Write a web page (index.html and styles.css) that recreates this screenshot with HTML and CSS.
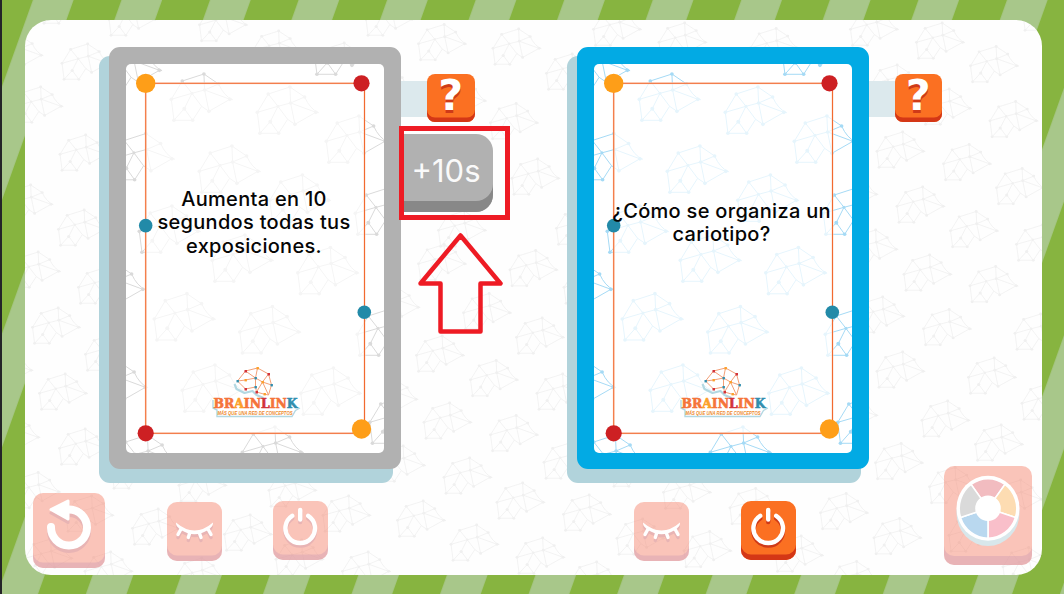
FILE: index.html
```
<!DOCTYPE html>
<html lang="es">
<head>
<meta charset="utf-8">
<title>BrainLink</title>
<link rel="stylesheet" href="styles.css">
</head>
<body>
<svg class="defs" aria-hidden="true">
  <defs>
    <g id="brain">
      <path fill="none" stroke="currentColor" stroke-width="3" d="M8 139L0 76L33 21L98 0L142 30Q158 66 184 77L176 76L113 112L91 97L64 139H8L39 104L64 139M39 104L62 58L0 76M33 21L62 58L100 48L98 0M142 30L100 48L176 76M100 48L113 112M62 58L91 97"/>
      <g fill="currentColor"><circle cx="0" cy="76" r="5.5"/><circle cx="33" cy="21" r="5.5"/><circle cx="98" cy="0" r="5.5"/><circle cx="142" cy="30" r="5.5"/><circle cx="176" cy="76" r="5.5"/><circle cx="113" cy="112" r="5.5"/><circle cx="64" cy="139" r="5.5"/><circle cx="8" cy="139" r="5.5"/><circle cx="39" cy="104" r="6"/><circle cx="62" cy="58" r="4.5"/><circle cx="100" cy="48" r="5.5"/></g>
    </g>
    <g id="logo">
      <path stroke="#b3d8e2" stroke-width="2.2" fill="none" stroke-linejoin="round" d="M23 18L25 23L33 27L41 25L45 29L52 32"/>
      <path stroke="#f3a078" stroke-width="1" fill="none" d="M26 15L34 5L46 2L57 8L60 19L57 29L52 28L45 26L44 21L34 23L26 15L34 14L44 12L34 5M46 2L44 12L51 16L57 8M44 12V21M51 16L45 26M51 16L60 19M51 16L57 29"/>
      <g fill="#d2333a"><rect x="33" y="4" width="2.5" height="2.5"/><rect x="56" y="7" width="2.5" height="2.5"/><rect x="33" y="22" width="2.5" height="2.5"/><rect x="44" y="25" width="2.5" height="2.5"/></g>
      <g fill="#318eae"><rect x="25" y="14" width="2.4" height="2.4"/><rect x="43" y="11" width="2.4" height="2.4"/><rect x="43" y="20" width="2.4" height="2.4"/><rect x="59" y="18" width="2.4" height="2.4"/></g>
      <g fill="#fca02a"><rect x="45" y="1" width="2.4" height="2.4"/><rect x="33" y="13" width="2.4" height="2.4"/><rect x="50" y="15" width="2.4" height="2.4"/><rect x="52" y="27" width="2.4" height="2.4"/></g>
      <path d="M1.500 34V42L5.500 44V50.500H80.500L84 44.500L88.500 42" fill="none" stroke="#b3d8e2" stroke-width="1.400"/>
      <text x="2" y="42.4" textLength="84" lengthAdjust="spacingAndGlyphs" class="logo-name"><tspan class="o">BR</tspan><tspan class="y">A</tspan><tspan class="o">IN</tspan><tspan class="r">L</tspan><tspan class="o">IN</tspan><tspan class="b">K</tspan></text>
      <text x="6" y="48.8" textLength="75" lengthAdjust="spacingAndGlyphs" class="logo-tag">MÁS QUE UNA RED DE CONCEPTOS</text>
    </g>
    <g id="frame">
      <rect x="19.7" y="19.3" width="218.8" height="350" fill="#fff" fill-opacity=".72" stroke="#fbd3c0" stroke-width="1.8"/>
      <rect x="19.7" y="19.3" width="218.8" height="350" fill="none" stroke="#f26a30" stroke-width="1"/>
      <g fill="#fe9e18"><circle cx="19.7" cy="19.4" r="9.7"/><circle cx="235.5" cy="365" r="9.7"/></g>
      <g fill="#cd2023"><circle cx="235.5" cy="19.3" r="8.1"/><circle cx="19.7" cy="369.3" r="8.1"/></g>
      <g fill="#228aa8"><circle cx="19.7" cy="161.6" r="6.8"/><circle cx="238.3" cy="248.3" r="6.8"/></g>
      <use href="#logo" x="85.5" y="302"/>
    </g>
    <g id="eye">
      <path fill="none" stroke="currentColor" stroke-linecap="round" stroke-width="3.4" d="M14 27L11 32.5M23 30L21.3 35.5M32 30L34 35.5M41 27L44 32.5"/>
      <path fill="currentColor" d="M9 20.5Q27.500 36.500 46 20.500Q46.500 24 41 28Q27.500 36.500 14 28Q8.500 24 9 20.500Z"/>
    </g>
    <path id="power" fill="none" stroke="currentColor" stroke-width="4.4" stroke-linecap="round" d="M27.200 9V18.500M19.200 14.800A14.800 14.800 0 1 0 35.200 14.800"/>
    <g id="undo">
      <path fill="none" stroke="currentColor" stroke-width="8" stroke-linecap="round" d="M18 34A18 18 0 1 0 36 16.500"/>
      <path fill="currentColor" stroke="currentColor" stroke-width="3" stroke-linejoin="round" d="M18 16.500L35 8V26Z"/>
    </g>
    <pattern id="stripes" width="88.55" height="600" patternUnits="userSpaceOnUse" patternTransform="skewX(-19.7)">
      <rect x="33" width="40.5" height="600" fill="#a8c78a"/>
    </pattern>
  </defs>
</svg>
<svg class="backdrop" width="1062" height="594" viewBox="2 0 1062 594"><rect width="1064" height="594" fill="#87b440"/><rect width="1064" height="594" fill="url(#stripes)"/></svg>
<main class="board">
  <svg class="pattern" id="board-pattern" width="1017" height="556" viewBox="25 19 1017 556"></svg>
  <section class="players">
    <div class="player">
      <article class="card card-gray">
        <svg class="face" width="258" height="389" viewBox="0 0 258 389"><g class="card-pattern"></g><use href="#frame"/></svg>
        <p class="question">Aumenta en 10<br>segundos todas tus<br>exposiciones.</p>
      </article>
      <div class="side">
        <div class="help"><button class="btn btn-help">?</button></div>
        <button class="bonus">+10s</button>
      </div>
    </div>
    <div class="player">
      <article class="card card-blue">
        <svg class="face" width="258" height="389" viewBox="0 0 258 389"><g class="card-pattern"></g><use href="#frame"/></svg>
        <p class="question">¿Cómo se organiza un<br>cariotipo?</p>
      </article>
      <div class="side">
        <div class="help"><button class="btn btn-help">?</button></div>
      </div>
    </div>
  </section>
  <nav class="controls">
    <button class="btn muted undo" aria-label="Volver"><svg width="72" height="69"><use class="icon-shade" href="#undo" y="3.500"/><use href="#undo"/></svg></button>
    <button class="btn muted eye1" aria-label="Ocultar"><svg width="55" height="54"><use class="icon-shade" href="#eye" y="3"/><use href="#eye"/></svg></button>
    <button class="btn muted power1" aria-label="Terminar"><svg width="55" height="54"><use class="icon-shade" href="#power" y="2.500"/><use href="#power"/></svg></button>
    <button class="btn muted eye2" aria-label="Ocultar"><svg width="55" height="54"><use class="icon-shade" href="#eye" y="3"/><use href="#eye"/></svg></button>
    <button class="btn power2" aria-label="Terminar"><svg width="55" height="54"><use class="icon-shade" href="#power" y="2.500"/><use href="#power"/></svg></button>
    <button class="btn muted wheel" aria-label="Ruleta">
      <svg width="88" height="90" viewBox="0 0 88 90">
        <ellipse cx="44" cy="47" rx="31.500" ry="33" fill="#d8e7eb"/>
        <ellipse cx="44" cy="42.300" rx="31.500" ry="32.500" fill="#fff"/>
        <g transform="translate(44 42.300)" stroke="#fff" stroke-width="1.600">
          <path fill="#f2bcc0" d="M0 0L-17 -23.900A28.900 29.900 0 0 1 17 -23.900Z"/>
          <path fill="#fddcb2" d="M0 0L17 -23.900A28.900 29.900 0 0 1 27.500 9.200Z"/>
          <path fill="#f9bfca" d="M0 0L27.500 9.200A28.900 29.900 0 0 1 0 29.900Z"/>
          <path fill="#b9d8ef" d="M0 0V29.900A28.900 29.900 0 0 1 -27.500 9.200Z"/>
          <path fill="#dadada" d="M0 0L-27.500 9.200A28.900 29.900 0 0 1 -17 -23.900Z"/>
          <circle r="12" fill="#fff"/>
        </g>
      </svg>
    </button>
  </nav>
</main>
<svg class="annotation" width="112" height="210" viewBox="399 126 112 210">
  <path fill="none" stroke="#ee1b24" stroke-width="5" d="M401.500 128.500H507.500V217.500H401.500Z"/>
  <path fill="none" stroke="#ee1b24" stroke-width="4.500" stroke-linejoin="round" d="M460.500 235.500L500.500 283.500H480.500V331.500H440.500V283.500H420.500Z"/>
</svg>
<script src="pattern.js"></script>
</body>
</html>
```
FILE: styles.css
```
* { box-sizing: border-box; }
body {
  position: relative;
  margin: 0;
  width: 1064px;
  height: 594px;
  overflow: hidden;
  padding: 19.500px 22px 19px 23px;
  border-left: 2px solid #242428;
  font-family: Inter, sans-serif;
  background: #87b440;
}
.defs { position: absolute; width: 0; height: 0; }
.backdrop { position: absolute; left: 0; top: 0; }
.board {
  position: relative;
  isolation: isolate;
  display: flex;
  flex-direction: column;
  width: 1017px;
  height: 555.500px;
  background: #fefefe;
  border-radius: 26px;
  overflow: hidden;
}
.pattern { position: absolute; inset: 0; z-index: -2; color: #f0f0f0; }
.players { display: flex; padding: 27.500px 0 0 84px; height: 446.500px; }
.player { display: flex; flex: none; width: 467.600px; }
.card {
  position: relative;
  flex: none;
  width: 292px;
  height: 422px;
  border: 17px solid;
  border-radius: 11px;
}
.card::before {
  content: "";
  position: absolute;
  z-index: -1;
  left: -27px;
  top: -8px;
  width: 294px;
  height: 427px;
  background: #b1d3db;
  border-radius: 11px;
}
.card-gray { border-color: #b1b1b1; background: #b1b1b1; color: #dadada; }
.card-blue { border-color: #02aae4; background: #02aae4; color: #a5daf5; }
.face { display: block; background: #fff; border-radius: 5px; }
.question {
  position: absolute;
  inset: -3px 0 auto -2px;
  margin: 0;
  padding-top: 127px;
  text-align: center;
  white-space: nowrap;
  color: #050505;
  font-size: 20px;
  font-weight: 500;
  line-height: 23.300px;
  letter-spacing: .3px;
}
.card-blue .question { padding-top: 138.500px; }
button { border: 0; padding: 0; margin: 0; font-family: inherit; }
.side { padding-top: 27px; }
.help {
  width: 74px;
  height: 48px;
  padding-left: 26px;
  background: linear-gradient(#dce9ed, #dce9ed) 0 6.500px / 40px 36px no-repeat;
}
.btn {
  display: flex;
  justify-content: center;
  align-items: flex-start;
  background: #fb7022;
  color: #fff;
  border-radius: 10px;
  box-shadow: inset 0 -5.500px #d43716;
}
.btn-help {
  width: 47.500px;
  height: 48px;
  border-radius: 8px;
  box-shadow: inset 0 -4.500px #d43716;
  font: 700 43px/43px "DejaVu Sans", sans-serif;
  text-shadow: 0 3px #cf3a18;
}
.bonus {
  display: block;
  width: 93px;
  height: 78px;
  margin: 12px 0 0 -1px;
  padding: 0 1px 6px 0;
  border-radius: 0 17px 17px 0;
  background: #b1b1b1;
  box-shadow: inset 0 -11px #888;
  color: #fafafa;
  font-size: 31px;
  font-weight: 400;
}
.controls { display: flex; align-items: flex-start; padding-left: 8px; }
.controls .btn { flex: none; }
.controls svg { display: block; }
.icon-shade { color: #cf3a18; }
.muted { background: rgba(247, 127, 103, .45); box-shadow: inset 0 -5.500px rgba(210, 160, 180, .45); }
.muted .icon-shade { color: #e8b4b4; }
.undo { width: 72px; height: 75px; margin-top: 27px; }
.eye1, .eye2, .power1, .power2 { width: 55px; height: 59px; margin-top: 35.500px; }
.power1, .power2 { margin-top: 35px; }
.eye1 { margin-left: 62px; }
.power1 { margin-left: 51px; }
.eye2 { margin-left: 306px; }
.power2 { margin-left: 52px; }
.wheel { width: 88px; height: 99px; margin-left: 147.500px; box-shadow: inset 0 -9px rgba(210, 160, 180, .45); }
.logo-name { font: 700 12.500px "DejaVu Serif", serif; stroke-width: .6px; }
.logo-name .o { fill: #f5743a; stroke: #f5743a; }
.logo-name .y { fill: #fca02a; stroke: #fca02a; }
.logo-name .r { fill: #d2333a; stroke: #d2333a; }
.logo-name .b { fill: #318eae; stroke: #318eae; }
.logo-tag { font: italic 700 6px "Liberation Sans", sans-serif; fill: #ee8a2c; }
.annotation { position: absolute; left: 397px; top: 126px; }
```
FILE: pattern.js
```
// Left and top of each decorative network, in page coordinates.
const boardNets = [
  [62,43],[109,-1],[199.5,4.5],[253,30],[15,86],[60,134],[-5,35],[5,184],[58.5,209],[12.5,251],[78.5,267],[42,-13],
  [32.5,307],[39.5,373],[59.5,428],[85.5,334],[-15,350],[-8,417],[12.5,471.5],[112,452],[179,465],[132.5,508],[224.5,514],[66,495],[25,538],[85,551],[176,557],
  [416.5,335],[470.5,359.5],[537,373],[424,402],[490.5,414.5],[544,442],[444,457],[497,482],[397.5,500],[451,524],[517,537],[323,495],[342.5,551],[269,470],[516.5,317],[463.5,292.5],[372,287],[370,379],[377.5,445],[276,539],
  [366,-1],[418.5,23.5],[493,28],[546.5,53],[490.5,102.5],[512,158],[418.5,243.5],[510,249.5],[318.5,42],[365,69],[438.5,80.5],[438.5,210],
  [593.5,9],[659,22],[750.5,27.5],[556.5,208],[564,267],[563.5,494],[612,450],[663.5,472],[730,487.5],[617,518],[684,530.5],[775.5,535],[571,561],
  [850.5,9],[916.5,22],[970.5,45.5],[871.5,64],[990,100.5],[877,131],[943.5,143.5],[996.5,167.5],[897,186],[950.5,210.5],[1016.5,224],[904,254],[970,265.5],[850,229],[923.5,88],[830,174],[1023,-6],
  [923.5,308.5],[857,296],[1015,313],[877,351],[968.5,357],[1022,383],[922,400],[875.5,442.5],[975.5,424],[820.5,492.5],[874,517.5],[831,560.5],[929.5,466.5],[995,479],[949,515],[1003,546.5],[830,395]
];
const cardNets = [
  [639,74],[725,87],[667,146],[737.5,175],[581,133.5],[794,116],[607,206],[680,235],[765.5,247.5],[782,28],[568.5,45],[552,264],
  [622,293.7],[707.5,306.7],[650,365],[768.5,368],[710,427],[554.5,362],[582.5,435],[825,309],[837.5,397],[823,188]
];
const draw = (nets, dx, dy, sx, sy) => nets.map(([x, y]) =>
  `<use href="#brain" transform="translate(${x - dx} ${y - dy}) scale(${sx} ${sy})"/>`).join("");
document.getElementById("board-pattern").innerHTML = draw(boardNets, 0, 0, 0.262, 0.254);
document.querySelectorAll(".card-pattern").forEach(g => {
  g.innerHTML = draw(cardNets, 593.7, 64, 0.333, 0.333);
});
```
